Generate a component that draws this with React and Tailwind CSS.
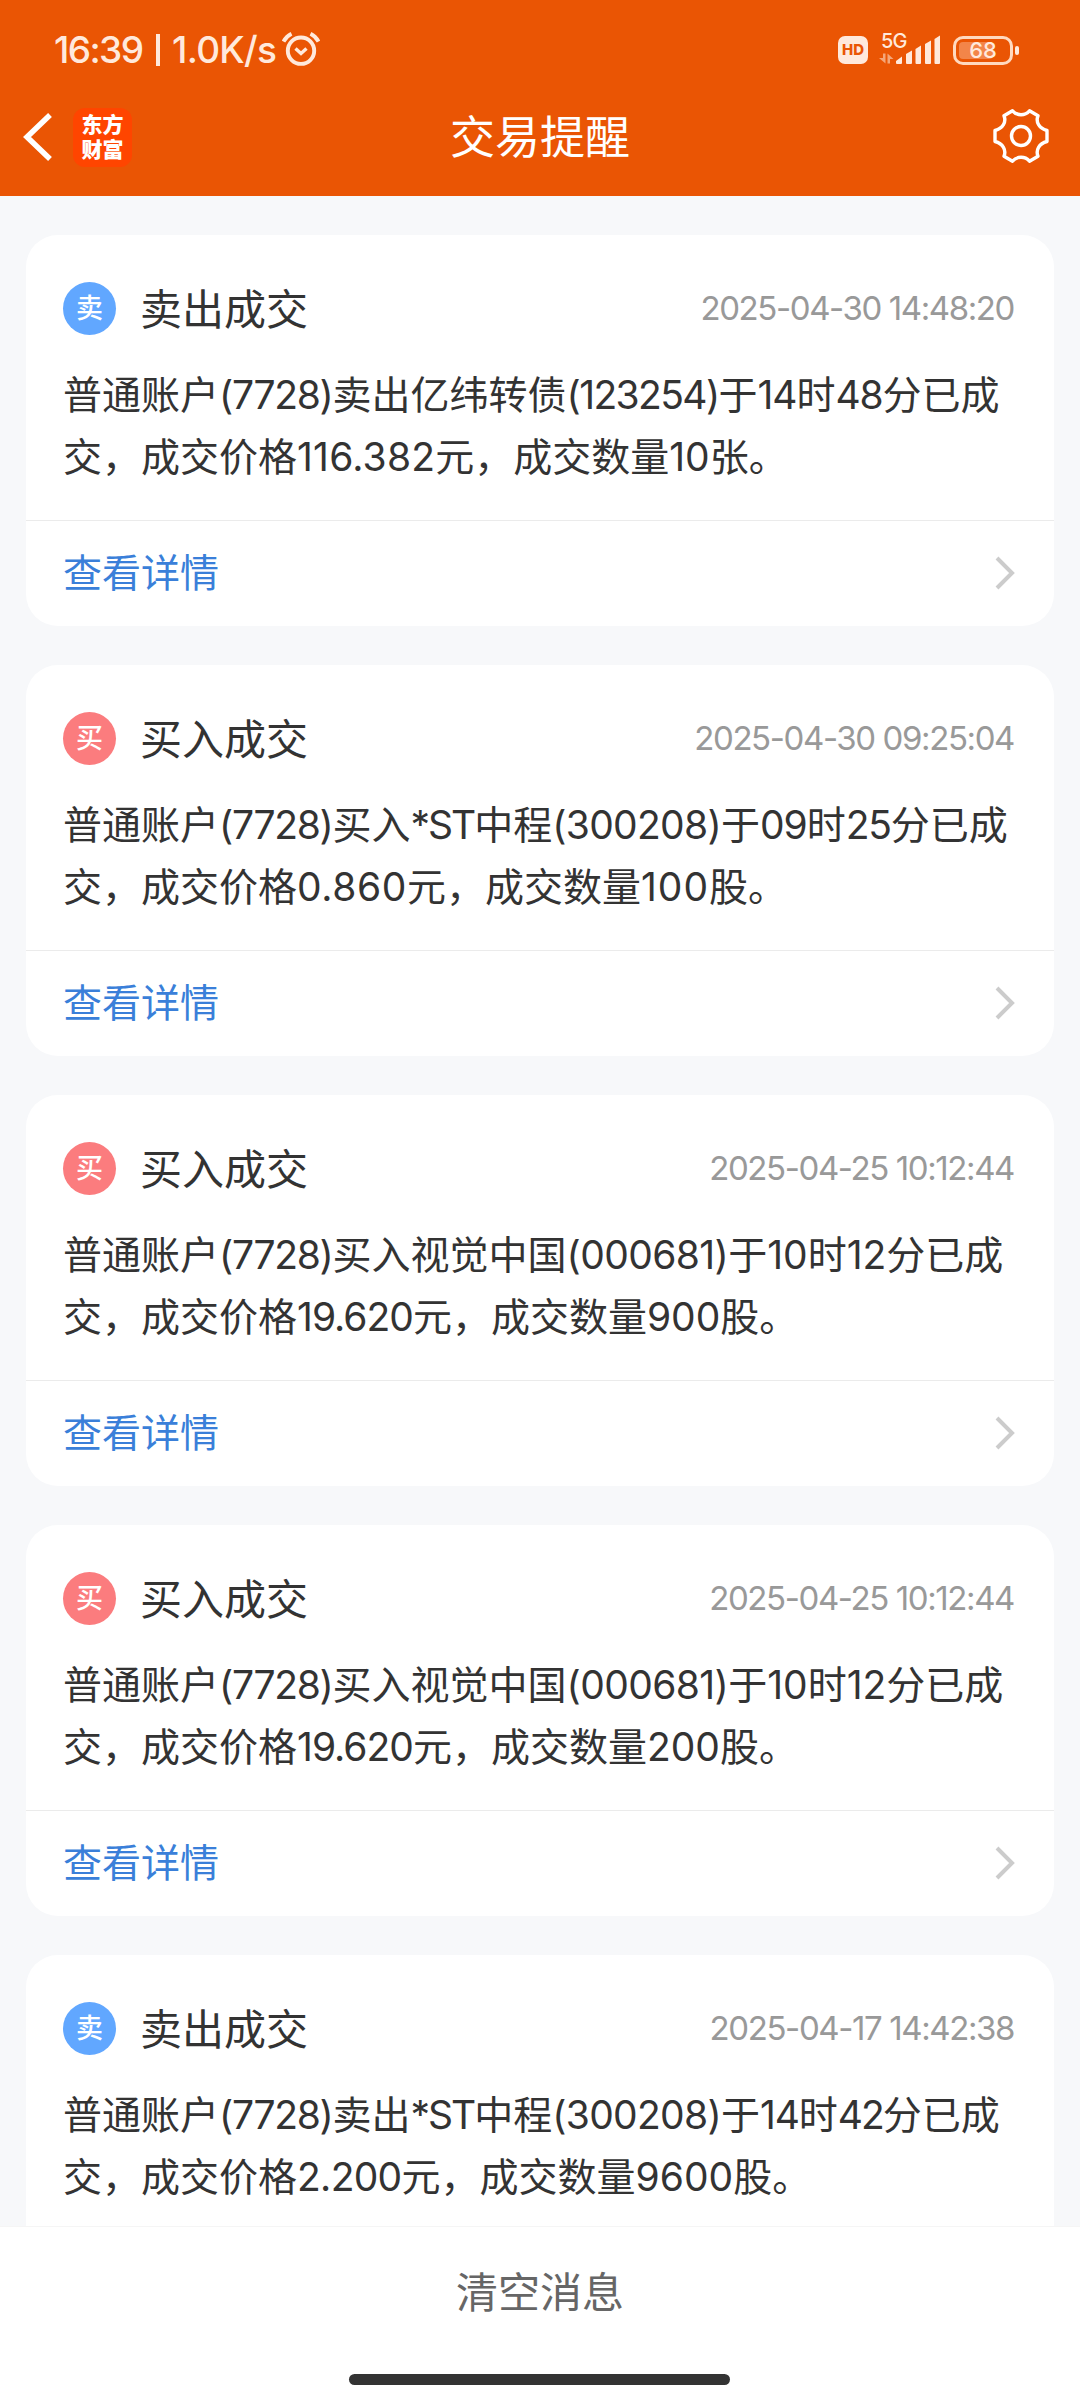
const CJK = "font-['Inter','Noto_Sans_CJK_SC',sans-serif]";

const messages = [
    {
        type: "sell",
        time: "2025-04-30 14:48:20",
        lines: [
            "普通账户(7728)卖出亿纬转债(123254)于14时48分已成",
            "交，成交价格116.382元，成交数量10张。",
        ],
    },
    {
        type: "buy",
        time: "2025-04-30 09:25:04",
        lines: [
            "普通账户(7728)买入*ST中程(300208)于09时25分已成",
            "交，成交价格0.860元，成交数量100股。",
        ],
    },
    {
        type: "buy",
        time: "2025-04-25 10:12:44",
        lines: [
            "普通账户(7728)买入视觉中国(000681)于10时12分已成",
            "交，成交价格19.620元，成交数量900股。",
        ],
    },
    {
        type: "buy",
        time: "2025-04-25 10:12:44",
        lines: [
            "普通账户(7728)买入视觉中国(000681)于10时12分已成",
            "交，成交价格19.620元，成交数量200股。",
        ],
    },
    {
        type: "sell",
        time: "2025-04-17 14:42:38",
        lines: [
            "普通账户(7728)卖出*ST中程(300208)于14时42分已成",
            "交，成交价格2.200元，成交数量9600股。",
        ],
    },
];

const types = {
    sell: { badge: "卖", title: "卖出成交", bg: "bg-[#61a7ff]" },
    buy: { badge: "买", title: "买入成交", bg: "bg-[#fb7c7e]" },
};

const tracking = {
    "(7728)": "tracking-[-1.3px]",
    "(123254)": "tracking-[-1.6px]",
    "(300208)": "tracking-[-0.7px]",
    "(000681)": "tracking-[-0.6px]",
    "*ST": "tracking-[-2px]",
    "116.382": "tracking-[0.2px]",
    "14": "tracking-[-1.1px]",
    "48": "tracking-[-1.1px]",
    "42": "tracking-[-2px]",
    "09": "tracking-[-1px]",
    "25": "tracking-[-1.3px]",
    "0.860": "tracking-[0.6px]",
    "100": "tracking-[1px]",
    "19.620": "tracking-[-1px]",
    "2.200": "tracking-[-0.7px]",
};

function Line({ text }) {
    return (
        <p>
            {text.split(/([\x20-\x7e]+)/).map((run, index) => (
                <span key={index} className={tracking[run]}>
                    {run}
                </span>
            ))}
        </p>
    );
}

function AlarmIcon() {
    return (
        <svg className="h-[36px] w-[38px]" viewBox="0 0 38 36" fill="none" stroke="#ffe9dc" strokeWidth="3.9">
            <circle cx="19" cy="18.700" r="13.2" />
            <path d="M13.5 16.500l5.500 5 5.500-5" strokeWidth="3.4" />
            <path d="M1.500 9.500C3.500 6 6 3.500 9.500 1.800M36.500 9.500C34.500 6 32 3.500 28.500 1.800" />
        </svg>
    );
}

function SignalIcon() {
    return (
        <svg className="h-[36px] w-[62px] overflow-visible" viewBox="0 0 62 36" fill="#ffe9dc">
            <text x="2" y="15.500" fontSize="20" fontWeight="500" fontFamily="Inter, sans-serif" letterSpacing="-0.8">5G</text>
            <path d="M4 21.500h2.500v10L0 26h4zM8.500 31.500V21.500L14.500 27h-3.500v4.500z" fill="#f4a679" />
            <path d="M17 29l6-4.500V31a1 1 0 0 1-1 1H18a1 1 0 0 1-1-1z" />
            <path d="M27 22l6-3.500V31a1 1 0 0 1-1 1H28a1 1 0 0 1-1-1z" />
            <path d="M36.500 17l5.500-3.500V31a1 1 0 0 1-1 1h-3.500a1 1 0 0 1-1-1z" />
            <path d="M46 12l6-3.500V31a1 1 0 0 1-1 1H47a1 1 0 0 1-1-1z" />
            <path d="M55.500 7l5.500-3.500V31a1 1 0 0 1-1 1h-3.500a1 1 0 0 1-1-1z" />
        </svg>
    );
}

function GearIcon() {
    return (
        <svg className="mb-[2px] h-[56px] w-[56px]" viewBox="0 0 56 56" fill="none" stroke="white" strokeWidth="3.4" strokeLinejoin="round">
            <circle cx="28" cy="28" r="9.500" />
            <path d="M19.500 2.800C24 8 32 8 36.500 2.800L45 7.800C42.500 14 46 20.500 54 22.500V33.500C46 35.500 42.500 42 45 48.200L36.500 53.200C32 48 24 48 19.500 53.200L11 48.200C13.500 42 10 35.500 2 33.500V22.500C10 20.500 13.500 14 11 7.800Z" />
        </svg>
    );
}

function StatusBar() {
    return (
        <div className="flex h-[100px] items-center justify-between pl-[54px] pr-[61px] text-[#ffe9dc]">
            <div className="flex items-center">
                <span className="w-[90px] whitespace-nowrap text-[37px] font-medium tracking-[-1.6px]">16:39</span>
                <span className="ml-[12px] mr-[12px] h-[32px] w-[4px] bg-[#ffe9dc]"></span>
                <span className="w-[110px] whitespace-nowrap text-[37px] font-medium tracking-[-0.7px]">1.0K/s</span>
                <AlarmIcon />
            </div>
            <div className="flex items-center">
                <span className="mr-[11px] flex h-[28px] w-[30px] items-center justify-center rounded-[7px] bg-[#ffe9dc] text-[15px] font-extrabold text-[#ea5504]">
                    HD
                </span>
                <SignalIcon />
                <span className="relative ml-[12px] flex h-[29px] w-[60px] items-center justify-center rounded-[10px] border-[3px] border-[#ffd9bf] text-[22px] font-medium">
                    <span className="absolute left-[3px] top-[3px] h-[17px] w-[34px] rounded-[4px] bg-[#f38549]"></span>
                    <span className="relative">68</span>
                </span>
                <span className="ml-[2px] h-[9px] w-[4px] rounded-[2px] bg-[#ffe9dc]"></span>
            </div>
        </div>
    );
}

function NavBar() {
    return (
        <div className="flex h-[74px] items-center justify-between pl-[22px] pr-[31px]">
            <div className="flex w-[240px] items-center gap-[20px]">
                <svg className="h-[50px] w-[31px]" viewBox="0 0 31 50" fill="none" stroke="white" strokeWidth="5.500">
                    <path d="M28 3L5 25l23 22" />
                </svg>
                <div className="flex h-[59px] w-[59px] flex-col items-center justify-center rounded-[12px] bg-[#ff4500] text-[21px] font-black leading-[25px] text-white">
                    <span>东方</span>
                    <span>财富</span>
                </div>
            </div>
            <h1 className="pt-[2px] text-[45px] leading-[60px] text-white">交易提醒</h1>
            <div className="flex w-[231px] justify-end">
                <GearIcon />
            </div>
        </div>
    );
}

function MessageCard({ message }) {
    const type = types[message.type];
    return (
        <div className="h-[391px] shrink-0 rounded-[32px] bg-white">
            <div className="h-[285px] px-[37px] pt-[43px]">
                <div className="flex h-[60px] items-center">
                    <span className={`flex h-[53px] w-[53px] items-center justify-center rounded-full pt-[2px] text-[27px] font-medium text-white ${type.bg}`}>
                        {type.badge}
                    </span>
                    <h2 className="ml-[24px] pt-[4px] text-[42px] leading-[60px]">{type.title}</h2>
                    <span className="ml-auto mr-[3px] pt-[2px] text-[33px] tracking-[-1.4px] text-[#999]">{message.time}</span>
                </div>
                <div className="mt-[26px] whitespace-nowrap text-[39px] leading-[62px]">
                    {message.lines.map((line) => (
                        <Line key={line} text={line} />
                    ))}
                </div>
            </div>
            <div className="flex h-[106px] items-center justify-between border-t border-[#ebebeb] px-[37px]">
                <span className="text-[39px] text-[#3a7fd9]">查看详情</span>
                <svg className="mb-[2px] mr-px h-[34px] w-[21px]" viewBox="0 0 21 34" fill="none" stroke="#ccc" strokeWidth="4">
                    <path d="M2 2l15 15L2 32" />
                </svg>
            </div>
        </div>
    );
}

export default function App() {
    return (
        <div className={`flex h-[2400px] w-[1080px] flex-col overflow-hidden bg-[#f7f8fa] text-[#333] ${CJK}`}>
            <header className="h-[196px] shrink-0 bg-[#ea5504]">
                <StatusBar />
                <NavBar />
            </header>

            <main className="flex min-h-0 flex-1 flex-col gap-[39px] overflow-hidden px-[26px] pt-[39px]">
                {messages.map((message, index) => (
                    <MessageCard key={index} message={message} />
                ))}
            </main>

            <footer className="flex h-[174px] shrink-0 flex-col items-center border-t border-[#f5f5f5] bg-white">
                <button className="mt-[36px] text-[42px] leading-[60px] text-[#666]">清空消息</button>
                <div className="mr-px mt-[51px] h-[11px] w-[381px] rounded-full bg-[#333]"></div>
            </footer>
        </div>
    );
}
